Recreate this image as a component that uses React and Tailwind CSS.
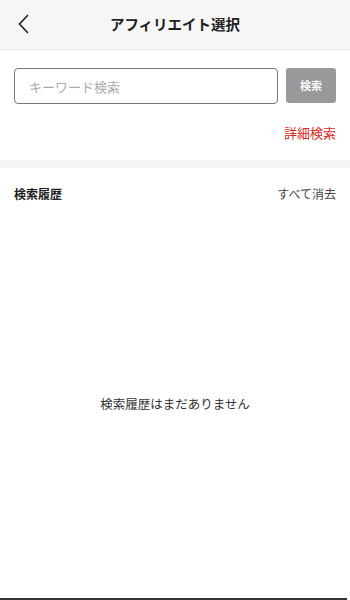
import React from 'react';

const font = { fontFamily: '"Noto Sans CJK JP", "Noto Sans", sans-serif' };

const BackIcon = () => (
  <svg width="14" height="20" viewBox="0 0 14 20" fill="none">
    <path d="M11 1 L2.5 10 L11 19" stroke="#222" strokeWidth="1.6" />
  </svg>
);

const App = () => {
  return (
    <div className="w-[350px] h-[600px] flex flex-col bg-white text-[#333]" style={font}>
      {/* Header */}
      <header className="h-[50px] shrink-0 bg-[#f6f6f6] border-b border-[#e8e8e8] flex items-center relative">
        <button className="absolute left-[17px] top-[14px]" aria-label="back">
          <BackIcon />
        </button>
        <h1 className="w-full text-center text-[14.5px] font-bold text-[#222] leading-none">
          アフィリエイト選択
        </h1>
      </header>

      {/* Search */}
      <div className="px-[14px] pt-[18px] pb-[21px]">
        <div className="flex gap-2">
          <input
            className="flex-1 h-[36px] rounded-[4px] border border-[#777] px-[14px] text-[13px] outline-none placeholder:text-[#aaa]"
            placeholder="キーワード検索"
          />
          <button className="w-[50px] h-[35px] rounded-[3px] bg-[#999] text-white text-[11px] font-bold">
            検索
          </button>
        </div>
        <div className="flex justify-end mt-[22px]">
          <span className="text-[13px] text-[#d9281d] leading-none">詳細検索</span>
        </div>
      </div>

      <div className="h-[8px] shrink-0 bg-[#f4f4f4]" />

      {/* History */}
      <div className="flex-1 flex flex-col px-[14px]">
        <div className="flex justify-between items-center h-[52px]">
          <span className="text-[12px] font-bold text-[#222]">検索履歴</span>
          <span className="text-[12px] text-[#444]">すべて消去</span>
        </div>
        <div className="flex-1 flex items-center justify-center pb-[18px] pt-[8px]">
          <span className="text-[12.5px] text-[#333]">検索履歴はまだありません</span>
        </div>
      </div>

      <div className="h-[2px] shrink-0 bg-[#333] mr-[3px]" />
    </div>
  );
};

export default App;
